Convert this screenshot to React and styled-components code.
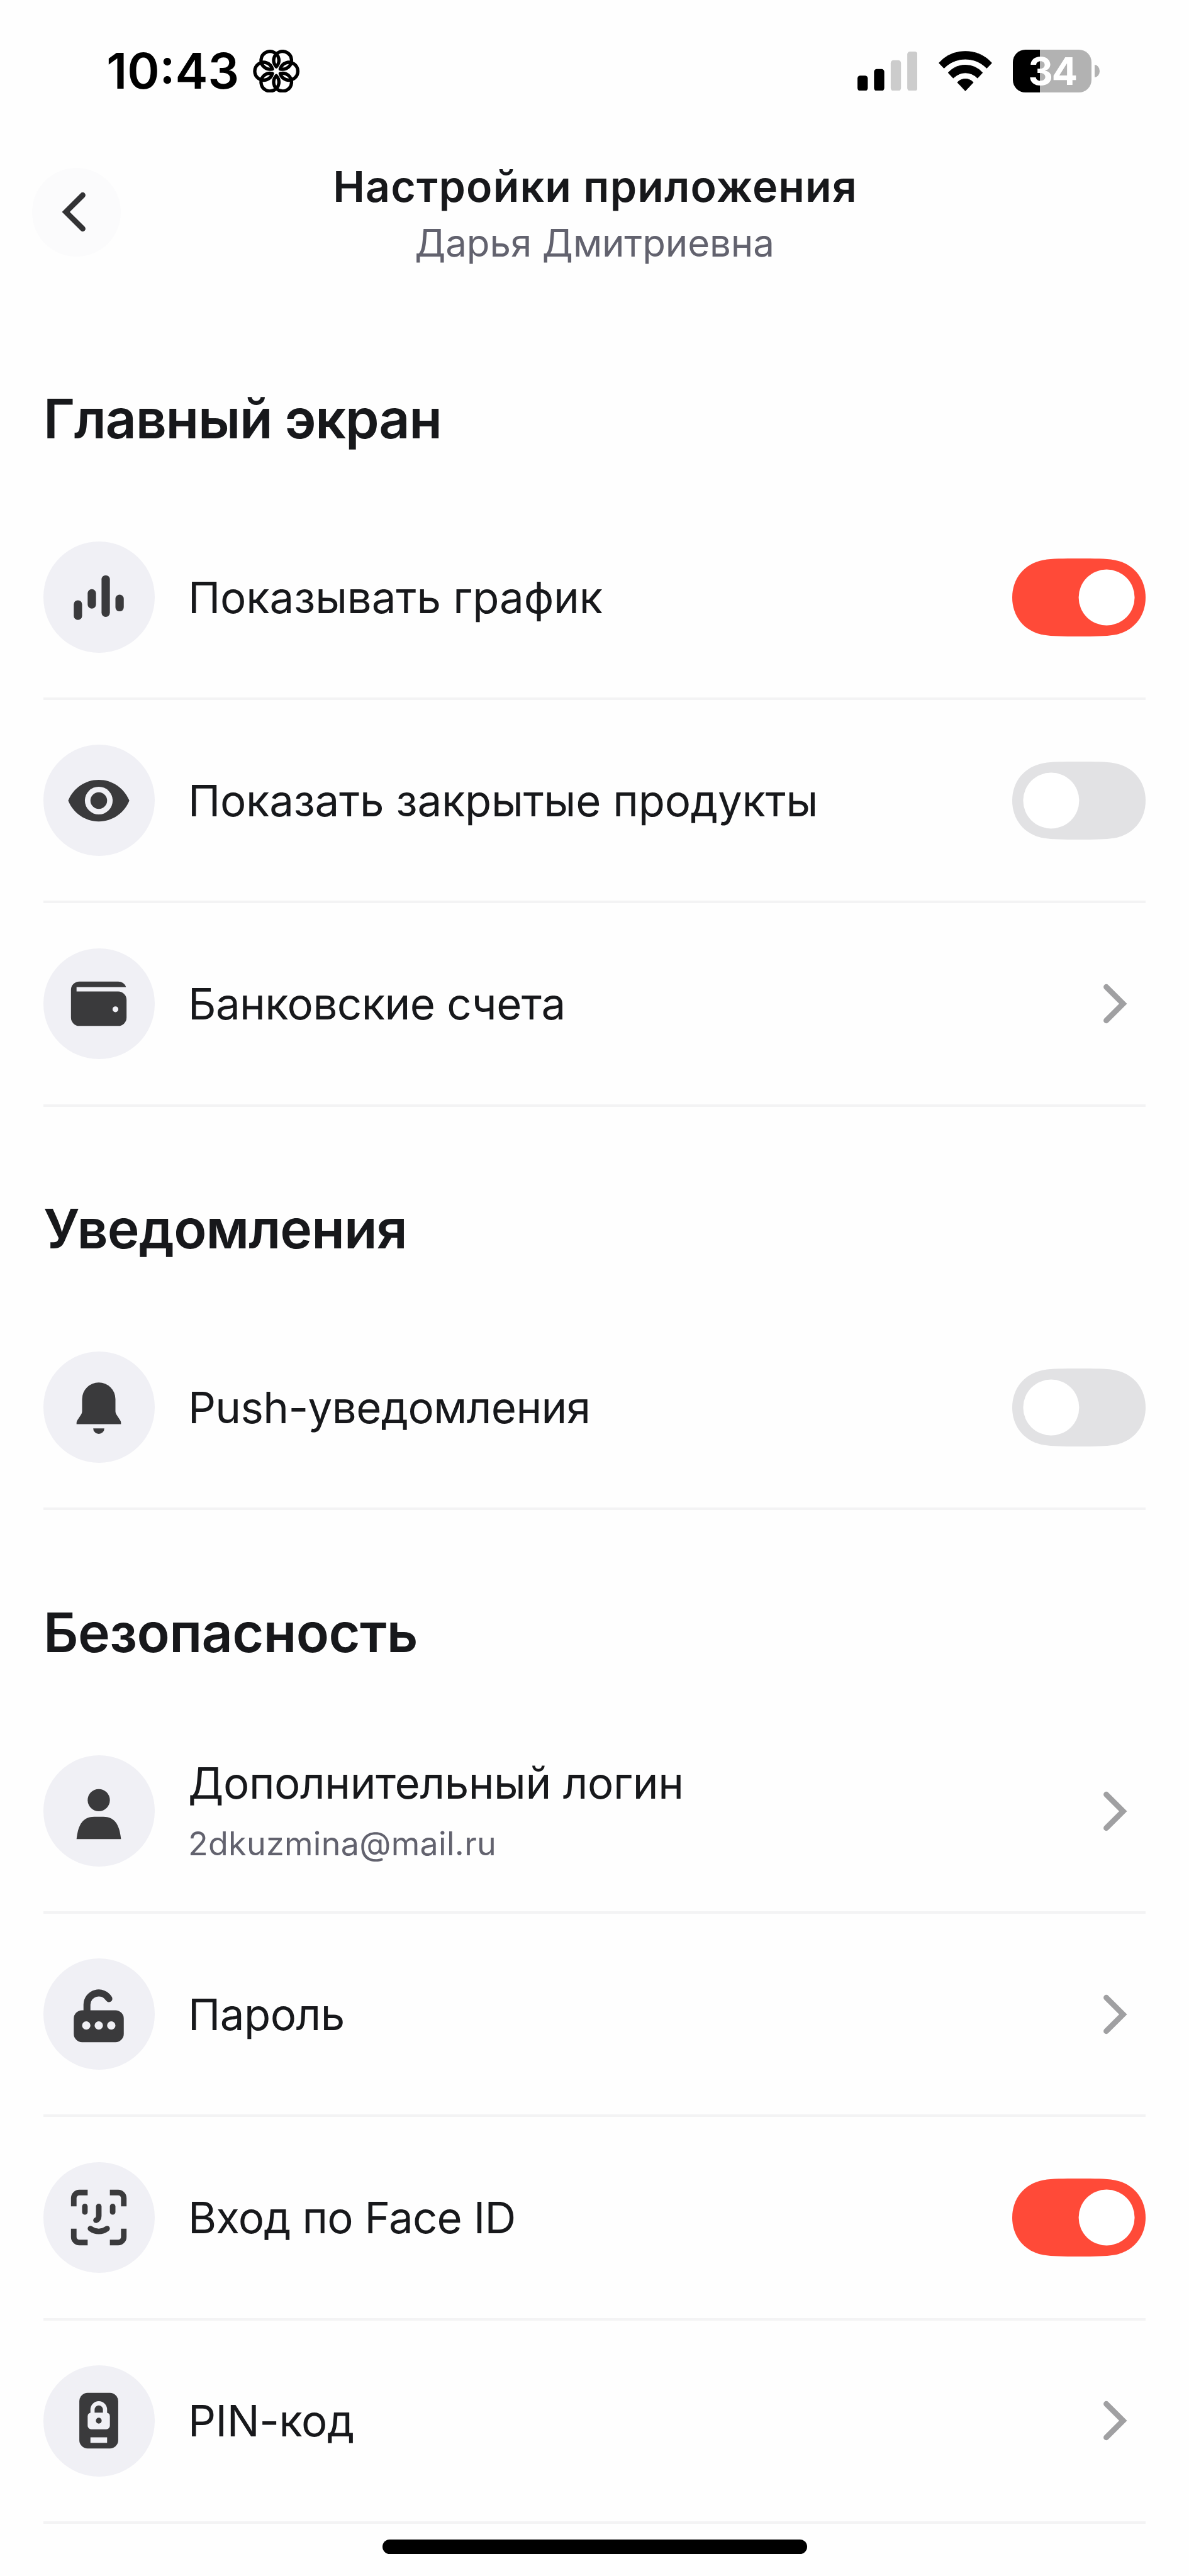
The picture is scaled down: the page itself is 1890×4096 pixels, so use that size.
import { useState } from "react";
import styled, { createGlobalStyle } from "styled-components";

const sections = [
  {
    title: "Главный экран",
    tracking: -1.3,
    items: [
      { id: "chart", icon: ChartIcon, label: "Показывать график", tracking: -0.12, toggle: true, on: true },
      { id: "closed", icon: EyeIcon, label: "Показать закрытые продукты", tracking: -0.24, toggle: true },
      { id: "accounts", icon: WalletIcon, label: "Банковские счета", tracking: -0.56 },
    ],
  },
  {
    title: "Уведомления",
    tracking: -0.95,
    items: [
      { id: "push", icon: BellIcon, label: "Push-уведомления", tracking: -0.62, toggle: true },
    ],
  },
  {
    title: "Безопасность",
    tracking: -0.65,
    items: [
      { id: "login", icon: PersonIcon, label: "Дополнительный логин", note: "2dkuzmina@mail.ru", tracking: -0.43 },
      { id: "password", icon: PasswordIcon, label: "Пароль", tracking: -0.5 },
      { id: "faceid", icon: FaceIcon, label: "Вход по Face ID", tracking: -0.75, toggle: true, on: true },
      { id: "pin", icon: PinIcon, label: "PIN-код", tracking: -0.4 },
    ],
  },
];

export default function App() {
  return (
    <Screen>
      <GlobalStyle />
      <StatusBar />
      <NavBar>
        <BackButton aria-label="Назад">
          <Icon viewBox="0 0 24 24">
            <path d="M14.15 5.95 8.1 12l6.05 6.05" fill="none" stroke="#323234" strokeWidth="2" strokeLinecap="round" />
          </Icon>
        </BackButton>
        <NavText>
          <NavTitle>Настройки приложения</NavTitle>
          <NavSubtitle>Дарья Дмитриевна</NavSubtitle>
        </NavText>
      </NavBar>

      {sections.map((section) => (
        <Section key={section.title}>
          <SectionTitle $tracking={section.tracking}>{section.title}</SectionTitle>
          {section.items.map((item) => (
            <SettingsRow key={item.id} item={item} />
          ))}
        </Section>
      ))}

      <HomeIndicator />
    </Screen>
  );
}

function StatusBar() {
  return (
    <StatusWrapper>
      <StatusLeft>
        <Time>10:43</Time>
        <FlowerIcon />
      </StatusLeft>
      <StatusRight>
        <SignalIcon />
        <WifiIcon />
        <Battery>
          <BatteryBody>34</BatteryBody>
          <BatteryCap />
        </Battery>
      </StatusRight>
    </StatusWrapper>
  );
}

function SettingsRow({ item }) {
  const [on, setOn] = useState(!!item.on);
  const ItemIcon = item.icon;

  return (
    <Row>
      <IconCircle>
        <Icon viewBox="0 0 24 24">
          <ItemIcon />
        </Icon>
      </IconCircle>
      <RowText>
        <Label $tracking={item.tracking}>{item.label}</Label>
        {item.note && <Note>{item.note}</Note>}
      </RowText>
      {item.toggle ? (
        <Switch role="switch" aria-checked={on} onClick={() => setOn((prev) => !prev)}>
          <SwitchShape viewBox="0 0 791 463" preserveAspectRatio="none">
            <Track
              $on={on}
              d="M0 231.5C0 120 70 30 185 9C240 0 300 0 395.5 0S551 0 606 9C721 30 791 120 791 231.5S721 433 606 454C551 463 491 463 395.5 463S240 463 185 454C70 433 0 343 0 231.5Z"
            />
            <circle cx={on ? 560 : 231} cy="231.5" r="166" fill="#fff" />
          </SwitchShape>
        </Switch>
      ) : (
        <Icon viewBox="0 0 24 24">
          <path d="M9.85 5.95 15.9 12l-6.05 6.05" fill="none" stroke="#a0a0a2" strokeWidth="2" strokeLinecap="round" />
        </Icon>
      )}
    </Row>
  );
}

function FlowerIcon() {
  // six rings, each one open where it would cross the centre
  return (
    <Flower viewBox="-139 -128 278 256">
      {[0, 60, 120, 180, 240, 300].map((angle) => (
        <path
          key={angle}
          transform={`rotate(${angle})`}
          d="M23.8 13.75A53 53 0 1 0 23.8-13.75"
          fill="none"
          stroke="#000"
          strokeWidth="20"
          strokeLinecap="round"
        />
      ))}
    </Flower>
  );
}

function SignalIcon() {
  return (
    <Signal viewBox="0 0 345 226">
      <rect x="0" y="138" width="59" height="88" rx="16" />
      <rect x="95" y="100" width="59" height="126" rx="16" />
      <rect x="191" y="50" width="59" height="176" rx="16" fill="#ccc" />
      <rect x="286" y="0" width="59" height="226" rx="16" fill="#ccc" />
    </Signal>
  );
}

function WifiIcon() {
  return (
    <Wifi viewBox="0 0 307 231">
      <g stroke="#000" strokeWidth="4" strokeLinejoin="round">
        <path d="M3 69A204 204 0 0 1 304 69L276 98A172 172 0 0 0 31 98Z" />
        <path d="M56 125A131 131 0 0 1 251 125L223 155A97 97 0 0 0 84 155Z" />
        <path d="M109 181A59 59 0 0 1 198 181L153.5 228Z" />
      </g>
    </Wifi>
  );
}

function ChartIcon() {
  return (
    <>
      <rect x="3" y="13" width="3" height="7.1" rx="1.5" />
      <rect x="8" y="9" width="3" height="7" rx="1.5" />
      <rect x="13" y="4" width="3" height="15" rx="1.5" />
      <rect x="18" y="11" width="3" height="6" rx="1.5" />
    </>
  );
}

function EyeIcon() {
  return (
    <path
      fillRule="evenodd"
      d="M12 4.5C7 4.5 2.73 7.61 1 12c1.73 4.39 6 7.5 11 7.5s9.27-3.11 11-7.5c-1.73-4.39-6-7.5-11-7.5zM12 17a5 5 0 1 1 0-10 5 5 0 0 1 0 10zm0-8a3 3 0 1 0 0 6 3 3 0 0 0 0-6z"
    />
  );
}

function WalletIcon() {
  return (
    <path
      fillRule="evenodd"
      d="M5 4h14a3 3 0 0 1 2.83 2H4v1.6h15a3 3 0 0 1 3 3V17a3 3 0 0 1-3 3H5a3 3 0 0 1-3-3V7a3 3 0 0 1 3-3zM18 12.95a1.05 1.05 0 1 0 0 2.1 1.05 1.05 0 0 0 0-2.1z"
    />
  );
}

function BellIcon() {
  return (
    <>
      <path d="M12 3a6 6 0 0 1 6 6v4.2c0 .6.1.9.4 1.4l1.3 2c.2.3.3.6.3.9v.5H4v-.5c0-.3.1-.6.3-.9l1.3-2c.3-.5.4-.8.4-1.4V9a6 6 0 0 1 6-6z" />
      <path d="M10 19.5h4a2 2 0 0 1-4 0z" />
    </>
  );
}

function PersonIcon() {
  return (
    <>
      <circle cx="12" cy="8" r="4" />
      <path d="M4 22c.5-4 1.5-8 6.4-8h3.2c4.9 0 5.9 4 6.4 8z" />
    </>
  );
}

function PasswordIcon() {
  return (
    <>
      <path d="M7.75 12V8.5a4.25 4.25 0 0 1 7.9-2.15" fill="none" stroke="#3a3a3c" strokeWidth="2.5" strokeLinecap="round" />
      <path
        fillRule="evenodd"
        d="M6 10.5h12a3 3 0 0 1 3 3V19a3 3 0 0 1-3 3H6a3 3 0 0 1-3-3v-5.5a3 3 0 0 1 3-3zM7.5 14.5a1.5 1.5 0 1 0 0 3 1.5 1.5 0 0 0 0-3zM12 14.5a1.5 1.5 0 1 0 0 3 1.5 1.5 0 0 0 0-3zM16.5 14.5a1.5 1.5 0 1 0 0 3 1.5 1.5 0 0 0 0-3z"
      />
    </>
  );
}

function FaceIcon() {
  return (
    <g fill="none" stroke="#3a3a3c" strokeWidth="2">
      <path d="M8 3H5a2 2 0 0 0-2 2v3M16 3h3a2 2 0 0 1 2 2v3M8 21H5a2 2 0 0 1-2-2v-3M16 21h3a2 2 0 0 0 2-2v-3" />
      <path d="M7 8v2M17 8v2M12 8v3.4c0 .8-.4 1.4-1 1.6M9 16c.9.65 1.9 1 3 1s2.1-.35 3-1" strokeLinecap="round" strokeLinejoin="round" />
    </g>
  );
}

function PinIcon() {
  return (
    <>
      <rect x="5" y="2" width="14" height="20" rx="3" />
      <path d="M9.75 9.8V8a2.25 2.25 0 0 1 4.5 0v1.8" fill="none" stroke="#f0f0f5" strokeWidth="1.5" />
      <rect x="8" y="9.1" width="8" height="6" rx="1.3" fill="#f0f0f5" />
      <circle cx="12" cy="12" r="1.05" />
      <rect x="9" y="18" width="6" height="2" fill="#f0f0f5" />
    </>
  );
}

const GlobalStyle = createGlobalStyle`
  * {
    box-sizing: border-box;
  }

  body {
    margin: 0;
    background: #fefefe;
    font-family: Inter, "Liberation Sans", sans-serif;
    color: #17181b;
  }
`;

const Screen = styled.main`
  display: flex;
  flex-direction: column;
  width: 1890px;
  height: 4096px;
  overflow: hidden;
`;

const StatusWrapper = styled.div`
  display: flex;
  justify-content: space-between;
  align-items: center;
  flex: none;
  height: 226px;
  padding: 0 142.1px 0 169.2px;
  color: #000;
`;

const StatusLeft = styled.div`
  display: flex;
  align-items: center;
  gap: 22.4px;
`;

const Time = styled.span`
  font-size: 78px;
  font-weight: 600;
  line-height: 94px;
`;

const Flower = styled.svg`
  width: 74.4px;
  height: 68.6px;
`;

const StatusRight = styled.div`
  display: flex;
  align-items: center;
  gap: 33.5px;
`;

const Signal = styled.svg`
  width: 95.5px;
  height: 62.5px;
`;

const Wifi = styled.svg`
  width: 85px;
  height: 64px;
`;

const Battery = styled.div`
  display: flex;
  align-items: center;
  gap: 4.7px;
`;

const BatteryBody = styled.div`
  display: flex;
  align-items: center;
  justify-content: center;
  width: 125.4px;
  height: 68.6px;
  border-radius: 20px;
  background: linear-gradient(90deg, #000 43px, #b2b2b2 43px);
  color: #fff;
  font-size: 61px;
  font-weight: 700;
  letter-spacing: -2.2px;
`;

const BatteryCap = styled.div`
  width: 7.8px;
  height: 20.8px;
  border-radius: 0 8px 8px 0 / 0 10px 10px 0;
  background: #b2b2b2;
`;

const NavBar = styled.header`
  display: grid;
  grid-template-columns: 141px 1fr 141px;
  align-items: center;
  flex: none;
  height: 222px;
  margin-bottom: 23.5px;
  padding: 0 51.3px;
`;

const BackButton = styled.button`
  display: flex;
  align-items: center;
  justify-content: center;
  width: 141px;
  height: 141px;
  padding: 0;
  border: 0;
  border-radius: 50%;
  background: #fbfbfc;
`;

const NavText = styled.div`
  display: flex;
  flex-direction: column;
  align-items: center;
  gap: 1.5px;
`;

const NavTitle = styled.h1`
  margin: 0;
  font-size: 68px;
  font-weight: 600;
  line-height: 97px;
  letter-spacing: 1.15px;
  text-indent: 2px;
`;

const NavSubtitle = styled.p`
  margin: 0;
  font-size: 60px;
  line-height: 79.5px;
  letter-spacing: -0.1px;
  color: #62626e;
`;

const Section = styled.section`
  display: flex;
  flex-direction: column;
  flex: none;
  padding: 141.6px 69.1px 0;
`;

const SectionTitle = styled.h2`
  margin: 0 0 71px;
  font-size: 86px;
  font-weight: 600;
  line-height: 106px;
  letter-spacing: ${({ $tracking }) => $tracking}px;
`;

const Row = styled.div`
  display: flex;
  align-items: center;
  gap: 53px;
  height: 323.2px;
  border-bottom: 4px solid #f3f3f4;
`;

const IconCircle = styled.div`
  display: flex;
  align-items: center;
  justify-content: center;
  flex: none;
  width: 176.8px;
  height: 176.8px;
  border-radius: 50%;
  background: #f0f0f5;
`;

const Icon = styled.svg`
  flex: none;
  width: 106px;
  height: 106px;
  fill: #3a3a3c;
`;

const RowText = styled.div`
  display: flex;
  flex-direction: column;
  flex: 1;
  gap: 17.6px;
`;

const Label = styled.span`
  font-size: 69px;
  line-height: 88.3px;
  letter-spacing: ${({ $tracking }) => $tracking}px;
`;

const Note = styled.span`
  font-size: 52px;
  line-height: 70.6px;
  letter-spacing: 0.3px;
  color: #62626e;
`;

const Switch = styled.button`
  flex: none;
  width: 212px;
  height: 124px;
  padding: 0;
  border: 0;
  background: none;
`;

const SwitchShape = styled.svg`
  display: block;
  width: 100%;
  height: 100%;
`;

const Track = styled.path`
  fill: ${({ $on }) => ($on ? "#ff4a38" : "#e2e2e4")};
`;

const HomeIndicator = styled.div`
  align-self: center;
  flex: none;
  width: 675px;
  height: 22.5px;
  margin-top: 25.6px;
  border-radius: 12px;
  background: #000;
`;
